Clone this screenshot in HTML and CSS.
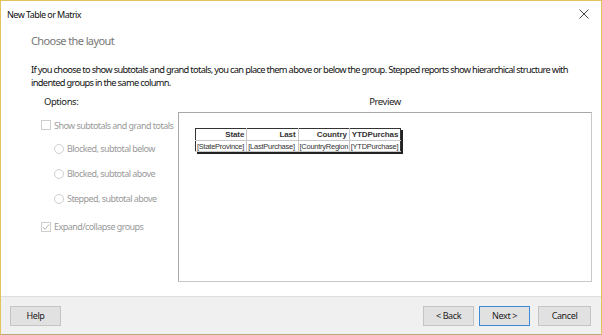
FILE: index.html
```html
<!DOCTYPE html>
<html lang="en">
<head>
  <meta charset="UTF-8">
  <title>New Table or Matrix</title>
  <link rel="stylesheet" href="styles.css">
</head>
<body>
  <div class="ventana">
    <div class="barra-titulo">
      <span class="titulo">New Table or Matrix</span>
      <svg class="cerrar" width="10" height="10" viewBox="0 0 10 10">
        <path d="M0.5 0.5 L9.5 9.5 M9.5 0.5 L0.5 9.5" stroke="#444" stroke-width="1" fill="none"/>
      </svg>
    </div>

    <div class="contenido">
      <h1 class="encabezado">Choose the layout</h1>
      <p class="descripcion">If you choose to show subtotals and grand totals, you can place them above or below the group. Stepped reports show hierarchical structure with indented groups in the same column.</p>

      <div class="zona">
        <div class="opciones">
          <div class="etiqueta">Options:</div>
          <div class="fila check">
            <span class="caja"></span>
            <span>Show subtotals and grand totals</span>
          </div>
          <div class="fila radio">
            <span class="circulo"></span>
            <span>Blocked, subtotal below</span>
          </div>
          <div class="fila radio">
            <span class="circulo"></span>
            <span>Blocked, subtotal above</span>
          </div>
          <div class="fila radio">
            <span class="circulo"></span>
            <span>Stepped, subtotal above</span>
          </div>
          <div class="fila check expandir">
            <span class="caja">
              <svg width="8" height="8" viewBox="0 0 8 8"><path d="M0.8 4 L3 6.3 L7.2 1.3" stroke="#b5b5b5" stroke-width="1" fill="none"/></svg>
            </span>
            <span>Expand/collapse groups</span>
          </div>
        </div>

        <div class="vista">
          <div class="etiqueta centro">Preview</div>
          <div class="marco">
            <table class="tabla">
              <tr class="cabecera">
                <td>State</td>
                <td>Last</td>
                <td>Country</td>
                <td class="recorte">YTDPurchas</td>
              </tr>
              <tr>
                <td>[StateProvince]</td>
                <td>[LastPurchase]</td>
                <td>[CountryRegion</td>
                <td>[YTDPurchase]</td>
              </tr>
            </table>
          </div>
        </div>
      </div>
    </div>

    <div class="pie">
      <button class="boton">Help</button>
      <div class="navegacion">
        <button class="boton">&lt; Back</button>
        <button class="boton activo">Next &gt;</button>
        <button class="boton cancelar">Cancel</button>
      </div>
    </div>
  </div>
</body>
</html>
```

FILE: styles.css
```css
* {
  margin: 0;
  padding: 0;
  box-sizing: border-box;
}

html, body {
  width: 602px;
  height: 335px;
  font-family: 'Noto Sans', 'Open Sans', sans-serif;
  color: #1a1a1a;
  background: #fff;
  overflow: hidden;
}

.ventana {
  width: 602px;
  height: 335px;
  border: 1px solid #e4c35e;
  border-bottom-color: #b9a878;
  display: flex;
  flex-direction: column;
  background: #fff;
}

.barra-titulo {
  height: 26px;
  display: flex;
  align-items: center;
  justify-content: space-between;
  padding: 0 12px 0 6px;
}

.titulo {
  font-size: 9px;
  letter-spacing: -0.55px;
  color: #111;
}

.contenido {
  flex: 1;
  padding: 6px 0 0 30px;
}

.encabezado {
  font-size: 11px;
  font-weight: 400;
  color: #777;
  letter-spacing: -0.6px;
  line-height: 16px;
}

.descripcion {
  margin-top: 14px;
  font-size: 9.3px;
  line-height: 13px;
  letter-spacing: -0.68px;
  color: #111;
  width: 560px;
}

.zona {
  display: flex;
  margin-top: 5px;
}

.opciones {
  width: 147px;
  padding-left: 10px;
}

.etiqueta {
  font-size: 9.5px;
  letter-spacing: -0.45px;
  color: #222;
  height: 15px;
  padding-left: 3px;
  line-height: 15px;
}

.etiqueta.centro {
  text-align: center;
  padding-left: 0;
}

.fila {
  display: flex;
  align-items: center;
  gap: 3px;
  font-size: 9px;
  letter-spacing: -0.55px;
  color: #9a9a9a;
  height: 25px;
  white-space: nowrap;
}

.opciones .fila:nth-child(2) {
  margin-top: 10px;
  height: 12px;
}

.opciones .fila:nth-child(3) {
  margin-top: 5px;
}

.fila.radio {
  padding-left: 13px;
}

.fila.expandir {
  margin-top: 3px;
}

.caja {
  flex-shrink: 0;
  width: 10px;
  height: 10px;
  border: 1px solid #cfcfcf;
  background: #fff;
  display: flex;
  align-items: center;
  justify-content: center;
}

.circulo {
  flex-shrink: 0;
  width: 10px;
  height: 10px;
  border: 1px solid #cfcfcf;
  border-radius: 50%;
}

.vista {
  width: 414px;
}

.marco {
  margin-top: 3px;
  height: 170px;
  border: 1px solid #a9a9a9;
  border-right-color: #c8c8c8;
  border-bottom-color: #c8c8c8;
  padding: 15px 0 0 16px;
}

.tabla {
  border-collapse: collapse;
  font-family: 'Liberation Sans', Arial, sans-serif;
  font-size: 7.5px;
  letter-spacing: -0.25px;
  color: #333;
  border: 1px solid #333;
  box-shadow: 2px 2px 0 #222;
  table-layout: fixed;
  width: 206px;
}

.tabla td {
  border: 1px solid #c8c8c8;
  padding: 0 1px;
  height: 11px;
  line-height: 9px;
  white-space: nowrap;
  overflow: hidden;
  width: 51px;
}

.tabla tr:first-child td {
  border-top: none;
}

.tabla td:first-child {
  border-left: none;
}

.tabla td:last-child {
  border-right: none;
}

.cabecera td {
  font-weight: 700;
  font-size: 8px;
  letter-spacing: -0.1px;
  text-align: right;
  height: 12px;
  padding-right: 2px;
}

.cabecera td.recorte {
  text-align: left;
  padding: 0 0 0 2px;
}

.pie {
  height: 38px;
  border-top: 1px solid #dedede;
  background: #f0f0f0;
  display: flex;
  align-items: center;
  justify-content: space-between;
  padding: 0 10px 0 9px;
}

.navegacion {
  display: flex;
  gap: 5px;
}

.boton {
  height: 20px;
  width: 51px;
  font-family: 'Noto Sans', 'Open Sans', sans-serif;
  font-size: 9px;
  letter-spacing: -0.4px;
  color: #222;
  background: #e1e1e1;
  border: 1px solid #c4c4c4;
  cursor: pointer;
}

.boton.activo {
  border-color: #3c8ad6;
}

.boton.cancelar {
  margin-left: 3px;
  width: 53px;
}
```
